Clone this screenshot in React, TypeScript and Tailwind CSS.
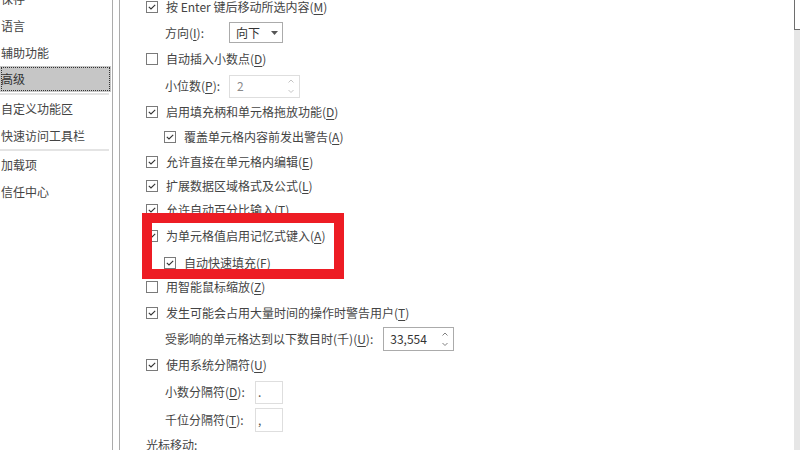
import React from 'react';

const Key: React.FC<{ k: string }> = ({ k }) => (
  <>
    (<u className="underline-offset-2">{k}</u>)
  </>
);

const Box: React.FC<{ checked: boolean }> = ({ checked }) => (
  <span className="flex h-[12px] w-[12px] shrink-0 items-center justify-center border border-[#7a7a7a] bg-white">
    {checked && (
      <svg width="10" height="10" viewBox="0 0 10 10">
        <path d="M1.8 4.8 L4 7 L8.2 2.8" fill="none" stroke="#333" strokeWidth="1.1" />
      </svg>
    )}
  </span>
);

interface CheckRowProps {
  h: string;
  checked: boolean;
  sub?: boolean;
  children: React.ReactNode;
}

const CheckRow: React.FC<CheckRowProps> = ({ h, checked, sub, children }) => (
  <div className={`flex items-center ${h} ${sub ? 'pl-[18px]' : ''}`}>
    <Box checked={checked} />
    <span className="ml-[8px] whitespace-nowrap">{children}</span>
  </div>
);

const Spin: React.FC<{ color: string }> = ({ color }) => (
  <svg width="6" height="15" viewBox="0 0 6 15" className="shrink-0">
    <path d="M0.5 3.5 L3 1 L5.5 3.5" fill="none" stroke={color} strokeWidth="1" />
    <path d="M0.5 11 L3 13.5 L5.5 11" fill="none" stroke={color} strokeWidth="1" />
  </svg>
);

const navItems = ['保存', '语言', '辅助功能'];

export default function App() {
  return (
    <div className="relative flex h-[450px] w-[800px] overflow-hidden bg-white font-['Noto_Sans_CJK_SC','Microsoft_YaHei',sans-serif] text-[12px] text-[#444]">
      {/* left navigation */}
      <nav className="w-[112px] shrink-0 pt-0">
        <div className="mt-[-15px]">
          {navItems.map((n) => (
            <div key={n} className="flex h-[27px] items-center pl-[1px] whitespace-nowrap">
              {n}
            </div>
          ))}
          <div className="flex h-[26px] w-[111px] items-center bg-[#c6c6c6] pl-[1px] text-[#333] outline-1 outline-offset-[-2px] outline-dotted outline-[#333]">
            高级
          </div>
          <div className="h-[3px] pt-[1px]">
            <div className="h-[2px] w-[109px] bg-[#e4e4e4]" />
          </div>
          <div className="flex h-[27px] items-center pl-[1px]">自定义功能区</div>
          <div className="flex h-[27px] items-center pl-[1px]">快速访问工具栏</div>
          <div className="h-[2px] w-[109px] bg-[#e4e4e4]" />
          <div className="flex h-[27px] items-center pl-[1px]">加载项</div>
          <div className="flex h-[27px] items-center pl-[1px]">信任中心</div>
        </div>
      </nav>

      <div className="w-px shrink-0 bg-[#ababab]" />
      <div className="w-[6px] shrink-0" />
      <div className="w-px shrink-0 bg-[#ababab]" />

      {/* options */}
      <main className="flex-1 pl-[26px]">
        <div className="mt-[-5px]">
          <CheckRow h="h-[24px]" checked>
            按 Enter 键后移动所选内容<Key k="M" />
          </CheckRow>
          <div className="flex h-[27px] items-center pl-[19px]">
            <span className="w-[64px] whitespace-nowrap">
              方向<Key k="I" />:
            </span>
            <div className="flex h-[21px] w-[54px] items-center justify-between border border-[#ababab] pl-[6px] pr-[4px] text-[#333]">
              <span>向下</span>
              <svg width="7" height="4" viewBox="0 0 7 4">
                <path d="M0 0 H7 L3.5 4 Z" fill="#555" />
              </svg>
            </div>
          </div>
          <CheckRow h="h-[26px]" checked={false}>
            自动插入小数点<Key k="D" />
          </CheckRow>
          <div className="flex h-[28px] items-center pl-[19px]">
            <span className="w-[64px] whitespace-nowrap">
              小位数<Key k="P" />:
            </span>
            <div className="flex h-[23px] w-[71px] items-center justify-between border border-[#dedede] pl-[7px] pr-[5px] text-[#8a8a8a]">
              <span>2</span>
              <Spin color="#c4c4c4" />
            </div>
          </div>
          <CheckRow h="h-[24px]" checked>
            启用填充柄和单元格拖放功能<Key k="D" />
          </CheckRow>
          <CheckRow h="h-[25px]" checked sub>
            覆盖单元格内容前发出警告<Key k="A" />
          </CheckRow>
          <CheckRow h="h-[25px]" checked>
            允许直接在单元格内编辑<Key k="E" />
          </CheckRow>
          <CheckRow h="h-[24px]" checked>
            扩展数据区域格式及公式<Key k="L" />
          </CheckRow>
          <CheckRow h="h-[24px]" checked>
            允许自动百分比输入<Key k="T" />
          </CheckRow>
          <CheckRow h="h-[28px]" checked>
            为单元格值启用记忆式键入<Key k="A" />
          </CheckRow>
          <CheckRow h="h-[25px]" checked sub>
            自动快速填充<Key k="F" />
          </CheckRow>
          <CheckRow h="h-[24px]" checked={false}>
            用智能鼠标缩放<Key k="Z" />
          </CheckRow>
          <CheckRow h="h-[27px]" checked>
            发生可能会占用大量时间的操作时警告用户<Key k="T" />
          </CheckRow>
          <div className="flex h-[26px] items-center gap-[10px] pl-[19px]">
            <span className="whitespace-nowrap">
              受影响的单元格达到以下数目时(千)<Key k="U" />:
            </span>
            <div className="flex h-[24px] w-[71px] items-center justify-between border border-[#ababab] pl-[6px] pr-[5px] text-[#333]">
              <span>33,554</span>
              <Spin color="#808080" />
            </div>
          </div>
          <CheckRow h="h-[26px]" checked>
            使用系统分隔符<Key k="U" />
          </CheckRow>
          <div className="flex h-[28px] items-center pl-[19px]">
            <span className="w-[90px] whitespace-nowrap">
              小数分隔符<Key k="D" />:
            </span>
            <div className="flex h-[23px] w-[28px] items-center border border-[#dedede] pl-[2px] text-[#555]">.</div>
          </div>
          <div className="flex h-[28px] items-center pl-[19px]">
            <span className="w-[90px] whitespace-nowrap">
              千位分隔符<Key k="T" />:
            </span>
            <div className="flex h-[24px] w-[28px] items-center border border-[#dedede] pl-[2px] text-[#555]">,</div>
          </div>
          <div className="flex h-[22px] items-center whitespace-nowrap">光标移动:</div>
        </div>
      </main>

      {/* scrollbar edge */}
      <div className="flex w-[6px] shrink-0 flex-col">
        <div className="h-[30px] border-b border-l border-[#6e6e6e] bg-white" />
        <div className="flex-1 bg-[#e6e6e6]" />
      </div>

      {/* highlight box */}
      <div className="pointer-events-none absolute left-[142px] top-[213px] h-[66px] w-[202px] border-[10px] border-[#ed1c24]" />
    </div>
  );
}
